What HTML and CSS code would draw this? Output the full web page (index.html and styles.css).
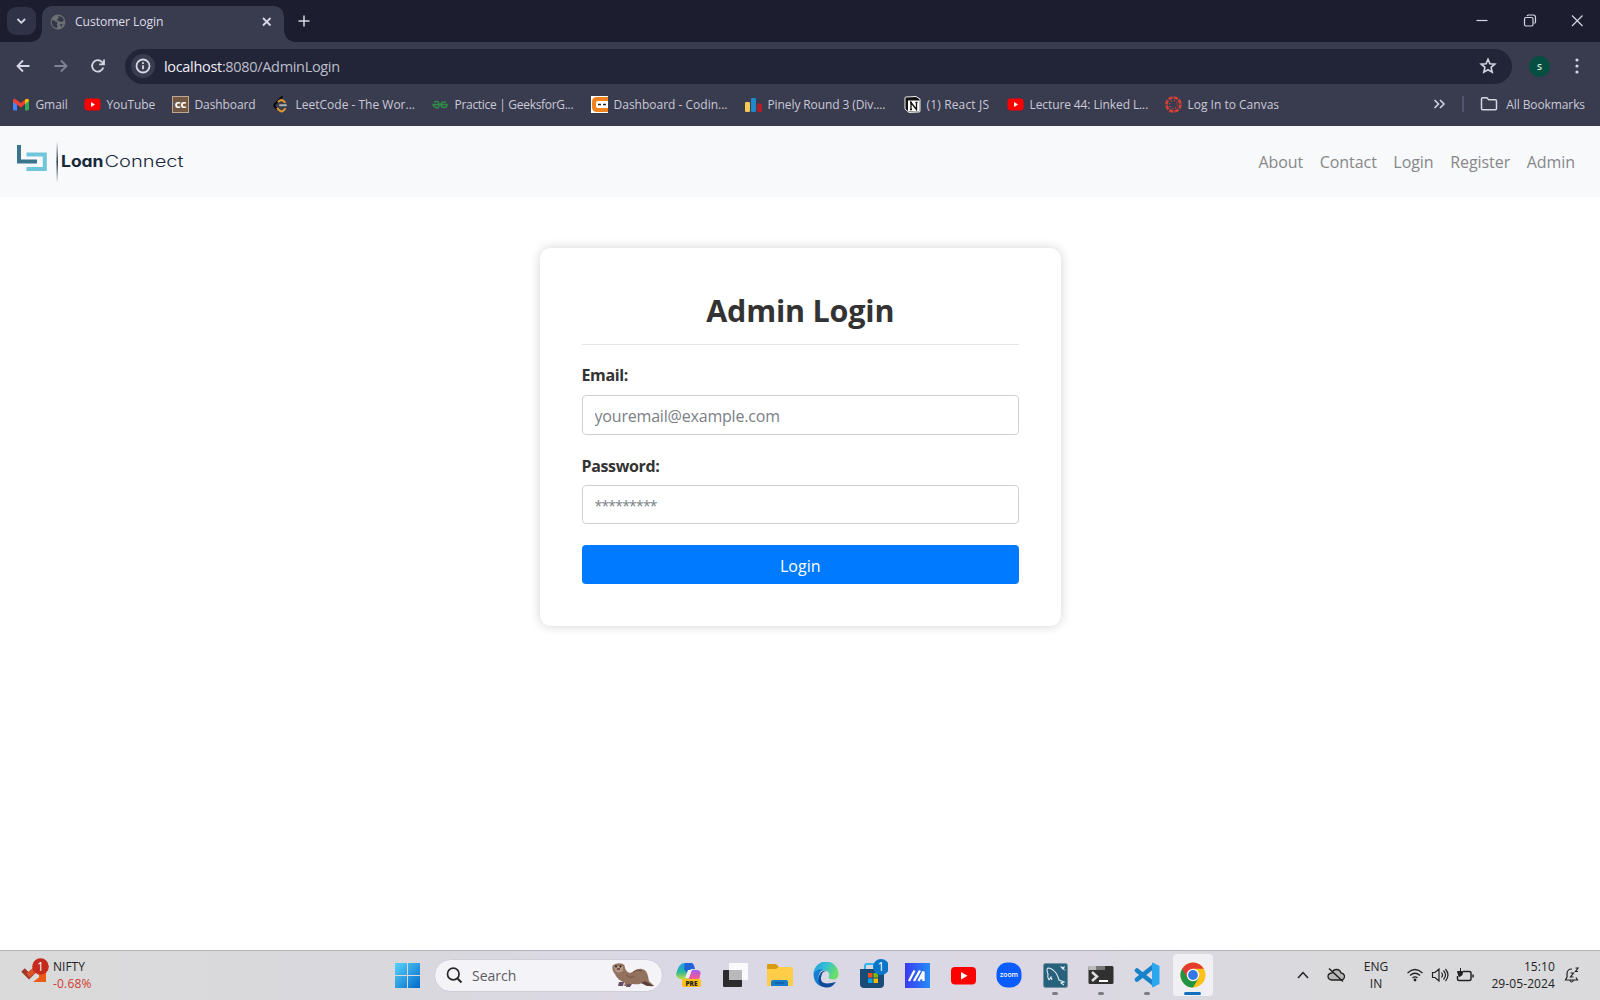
FILE: index.html
```html
<!DOCTYPE html>
<html lang="en">
<head>
<meta charset="utf-8">
<title>Customer Login</title>
<link rel="stylesheet" href="styles.css">
</head>
<body>
<div class="desktop">
  <header class="browser">
    <div class="tabstrip">
      <div class="tab-search"><svg width="29" height="28" viewBox="0 0 29 28"><path d="M10.500 12l3.800 3.800 3.800-3.800" class="line w2"/></svg></div>
      <div class="tab">
        <svg width="16" height="16" viewBox="0 0 16 16"><circle cx="8" cy="8" r="7.400" fill="#6c7073"/><path d="M2 6c2 .3 3 1.500 5 2 1 1-1 2 .5 4l-.5 2C3 14 1 10 2 6zM8 2l4 1 2 3c-1 2-3 2-4 1.500L8 7 7 5l2-1zM10 10l3 .5-2 2.500z" fill="#34374a"/></svg>
        <span class="tab-title">Customer Login</span>
        <svg width="12" height="12" viewBox="0 0 12 12"><path d="M2 2l7.500 7.500M9.500 2L2 9.500" class="line w2"/></svg>
      </div>
      <svg class="new-tab" width="14" height="14" viewBox="0 0 14 14"><path d="M7 1.500v11M1.500 7h11" class="line w15"/></svg>
      <div class="window-buttons">
        <svg width="14" height="14" viewBox="0 0 14 14"><path d="M1.500 6.500h11" class="line thin"/></svg>
        <svg width="14" height="14" viewBox="0 0 14 14"><rect x="1.500" y="3.500" width="8.500" height="8.500" rx="1.500" class="line thin"/><path d="M4 2q.5-1 2-1h4q2.500 0 2.500 2.500v4q0 1.500-1 2" class="line thin"/></svg>
        <svg width="14" height="14" viewBox="0 0 14 14"><path d="M2 1.500l10.500 10.500M12.500 1.500L2 12" class="line thin"/></svg>
      </div>
    </div>
    <div class="toolbar">
      <div class="nav-icons">
        <svg width="16" height="16" viewBox="0 0 16 16"><path d="M14.500 8H3M8 2.500L2.500 8 8 13.500" class="line w2"/></svg>
        <svg width="16" height="16" viewBox="0 0 16 16" class="dim"><path d="M1.500 8H13M8 2.500L13.500 8 8 13.500" class="line w2"/></svg>
        <svg width="16" height="16" viewBox="0 0 16 16"><path d="M13.300 9.500A5.700 5.700 0 1 1 12 4l1.500 1.500M14 1.500v4.800H9.200" class="line w2"/></svg>
      </div>
      <div class="address">
        <div class="site-info"><svg width="16" height="16" viewBox="0 0 16 16"><circle cx="8" cy="8" r="6.500" class="line w2"/><path d="M8 7.300v4M8 4.300v1.600" class="line w2"/></svg></div>
        <div class="url"><b>localhost</b>:8080/AdminLogin</div>
        <svg width="18" height="18" viewBox="0 0 18 18"><path d="M9 2.300l1.900 4.500 4.900.4-3.700 3.200 1.100 4.800L9 12.700l-4.200 2.500 1.100-4.800-3.700-3.200 4.900-.4z" fill="none" stroke="#d6d7e4" stroke-width="1.600"/></svg>
      </div>
      <div class="profile">S</div>
      <svg width="6" height="18" viewBox="0 0 6 18" fill="#d6d7e4"><circle cx="3" cy="3" r="1.600"/><circle cx="3" cy="9" r="1.600"/><circle cx="3" cy="15" r="1.600"/></svg>
    </div>
    <nav class="bookmarks">
      <div class="bm"><svg width="17" height="17" viewBox="0 0 17 17"><path d="M0 4v9q0 1.500 1.500 1.500H4V6z" fill="#4285f4"/><path d="M16 4v9q0 1.500-1.500 1.500H12V6z" fill="#34a853"/><path d="M12 3.500q4-2 4 1.500L12 8z" fill="#fbbc04"/><path d="M0 5q0-3.500 3-1.500l5 3.600L12 3.500V8l-4 3.500L0 6z" fill="#ea4335"/></svg><span>Gmail</span></div>
      <div class="bm"><svg width="17" height="17" viewBox="0 0 17 17"><rect x=".5" y="2.500" width="16" height="12" rx="3" fill="#f00"/><path d="M7 6v5l4-2.500z" fill="#fff"/></svg><span>YouTube</span></div>
      <div class="bm"><svg width="17" height="17" viewBox="0 0 17 17"><rect x=".5" y=".5" width="16" height="16" fill="#725744" stroke="#bda992"/><text x="8.500" y="12" class="cc">CC</text></svg><span>Dashboard</span></div>
      <div class="bm"><svg width="17" height="17" viewBox="0 0 17 17" fill="none" stroke-width="2" stroke-linecap="round"><path d="M9 1L2 8q-1.200 1.500 0 3l2 2" stroke="#080808"/><path d="M5.500 5.500q2.500-2.500 5-.5l1.300 1.200M4.500 12.500l1.500 1.500q2.500 2.500 4.500.5l1.500-1.500" stroke="#dd9632"/><path d="M7 9.300h6" stroke="#b3b3b3"/></svg><span class="leet">LeetCode - The Wor...</span></div>
      <div class="bm"><svg width="17" height="17" viewBox="0 0 17 17" fill="none" stroke="#2f8d46" stroke-width="1.500"><path d="M2 6Q7 4 7 8.500T4 11.500 1 8.500h14Q15 11.500 12 11.500T9 8.500 14 6"/></svg><span class="gfg">Practice | GeeksforG...</span></div>
      <div class="bm"><svg width="17" height="17" viewBox="0 0 17 17"><path d="M0 0h17v17H0z" fill="#fff"/><path d="M17 1H6Q1 1 1 6v5q0 5 5 5h11v-4H7q-2 0-2-1.500v-4Q5 5 7 5h10z" fill="#f0831e"/><path d="M7 8.500h3M12 8.500h3" stroke="#222" stroke-width="1.500"/></svg><span class="leet">Dashboard - Codin...</span></div>
      <div class="bm"><svg width="17" height="17" viewBox="0 0 17 17"><rect x="0" y="6" width="5" height="10" rx="1.300" fill="#f6c955"/><rect x="6" y="2" width="5" height="14" rx="1.300" fill="#1f8acb"/><rect x="12" y="7.500" width="5" height="8.500" rx="1.300" fill="#b01e2b"/></svg><span>Pinely Round 3 (Div....</span></div>
      <div class="bm"><svg width="17" height="17" viewBox="0 0 17 17"><path d="M1 2q0-1 1-1l10-.5L16 3v12q0 1-1 1l-10 .5L1 13z" fill="#111" stroke="#eee"/><path d="M4 4.500h11.500v11H4z" fill="#fff"/><path d="M7 13.500v-7l5.500 7v-7M6 6.500h2M6 13.500h2M11.500 6.500h2" fill="none" stroke="#111" stroke-width="1.300"/></svg><span class="react">(1) React JS</span></div>
      <div class="bm"><svg width="17" height="17" viewBox="0 0 17 17"><rect x=".5" y="2.500" width="16" height="12" rx="3" fill="#f00"/><path d="M7 6v5l4-2.500z" fill="#fff"/></svg><span>Lecture 44: Linked L...</span></div>
      <div class="bm"><svg width="17" height="17" viewBox="0 0 17 17" fill="none" stroke="#d64035"><circle cx="8.500" cy="8.500" r="7" stroke-width="2.600" stroke-dasharray="4.300 1.200"/><circle cx="8.500" cy="8.500" r="4" stroke-width="1.300" stroke-dasharray="1.200 1.940"/></svg><span class="leet">Log In to Canvas</span></div>
      <div class="bm-more">
        <svg width="13" height="12" viewBox="0 0 13 12"><path d="M1.500 2l4 4-4 4M7 2l4 4-4 4" class="line w15"/></svg>
        <i></i>
        <svg width="18" height="16" viewBox="0 0 18 16"><path d="M1.500 3q0-1.300 1.300-1.300h4l2 2h6.400q1.300 0 1.300 1.300v7.500q0 1.300-1.300 1.300H2.800q-1.300 0-1.300-1.300z" class="line w15"/></svg>
        <span>All Bookmarks</span>
      </div>
    </nav>
  </header>

  <main class="page">
    <div class="site-nav">
      <svg class="logo" width="170" height="44" viewBox="0 0 170 44">
        <defs><linearGradient id="fade" x2="0" y2="1"><stop stop-color="#17283b" stop-opacity="0"/><stop offset=".5" stop-color="#17283b"/><stop offset="1" stop-color="#17283b" stop-opacity="0"/></linearGradient></defs>
        <path d="M10.500 13.500h18.300V28H10.500" fill="none" stroke="#6fc6da" stroke-width="4"/>
        <path d="M3 4v16.500h18" fill="none" stroke="#39758b" stroke-width="4"/>
        <rect x="40.500" y="0" width="1.400" height="42" fill="url(#fade)"/>
        <text x="45" y="26" class="logo-bold" textLength="42.500" lengthAdjust="spacingAndGlyphs">Loan</text>
        <text x="88.500" y="26" class="logo-light" textLength="79" lengthAdjust="spacingAndGlyphs">Connect</text>
      </svg>
      <div class="links"><a>About</a><a>Contact</a><a>Login</a><a>Register</a><a>Admin</a></div>
    </div>
    <form class="card">
      <h1>Admin Login</h1>
      <label>Email:</label>
      <input type="email" placeholder="youremail@example.com">
      <label>Password:</label>
      <input type="password" class="pw" placeholder="*********">
      <button type="button">Login</button>
    </form>
  </main>

  <footer class="taskbar">
    <div class="widget">
      <svg width="32" height="30" viewBox="0 0 32 30"><path d="M2 12l6 6 6-6" fill="none" stroke="#a0382c" stroke-width="5"/><path d="M7 17.500l8-7 5 5" fill="none" stroke="#d9532c" stroke-width="5"/><path d="M12 24l13-10v10z" fill="#ec5a12"/><path d="M18 15h7v9h-7z" fill="#ec5a12"/><circle cx="19.500" cy="8.500" r="8.300" fill="#c42b1c"/><text x="19.500" y="12.500" class="badge-num">1</text></svg>
      <div><div>NIFTY</div><div class="down">-0.68%</div></div>
    </div>
    <div class="start"><svg width="25" height="25" viewBox="0 0 25 25"><defs><linearGradient id="win" x2="1" y2="1"><stop stop-color="#59d3fa"/><stop offset="1" stop-color="#0069c9"/></linearGradient></defs><path d="M0 0h12v12H0zM13 0h12v12H13zM0 13h12v12H0zM13 13h12v12H13z" fill="url(#win)"/></svg></div>
    <div class="search">
      <svg width="17" height="17" viewBox="0 0 17 17"><circle cx="7.300" cy="7" r="5.800" fill="none" stroke="#262626" stroke-width="1.700"/><path d="M11.500 11.500l4 4" stroke="#262626" stroke-width="2"/></svg>
      <span>Search</span>
      <svg width="44" height="26" viewBox="0 0 44 26"><path d="M4 12C1 9 1 5 2 3q5-3 10-1 2 1 2 4 1 4 5 5c4-1 6-5 12-4 6 1 6 8 7 12l5 5c-5 1-9-1-12-3-3 2-6 1-11 1l-3 2h-4l1-3c-4-2-8-4-10-9z" fill="#92715f"/><path d="M3 4h9v5q-4 3-8 0z" fill="#b49885"/><path d="M8 20h5l-1 4H7zM16 22h5l-2 3h-4z" fill="#665064"/><path d="M34 19l9 5h-7l-6-3z" fill="#5a4038"/><path d="M15 13q5 4 8 1M22 10q4-3 9-1" fill="none" stroke="#75523f"/><circle cx="5" cy="4.500" r=".9" fill="#111"/><circle cx="9.500" cy="4.500" r=".9" fill="#111"/><path d="M6 7h3" stroke="#3f2e2c" stroke-width="1.300"/></svg>
    </div>
    <div class="apps">
      <div class="app"><svg width="26" height="26" viewBox="0 0 26 26"><defs><linearGradient id="cp" x2="0" y2="1"><stop stop-color="#249df0"/><stop offset=".5" stop-color="#27b89c"/><stop offset="1" stop-color="#d9df36"/></linearGradient><linearGradient id="cq" x2="0" y2="1"><stop stop-color="#a05ff0"/><stop offset=".6" stop-color="#ee579b"/><stop offset="1" stop-color="#f29951"/></linearGradient></defs><path d="M8 1h9l-5 15q-1 3-4 2-8-1-8-6Q3 1 8 1z" fill="url(#cp)"/><path d="M9 1h6q3 0 4 6h-5l-2 5-4-5z" fill="#2163d7"/><path d="M15 8h6q5 0 3 6-1 6-5 6H9q4-1 6-12z" fill="url(#cq)"/><path d="M12 8h4l-3 8H9z" fill="#f3eafa"/><rect x="6" y="17" width="19" height="8" rx="2" fill="#ffc21a"/><text x="15.500" y="23.700" class="pre">PRE</text></svg></div>
      <div class="app"><svg width="26" height="26" viewBox="0 0 26 26"><rect x="1" y="8" width="19" height="17" rx="1" fill="#2c2c2e"/><rect x="7" y="1" width="19" height="17" rx="1" fill="#fff" opacity=".85"/><path d="M7 8h13v10H7z" fill="#b9b9bb"/></svg></div>
      <div class="app"><svg width="26" height="26" viewBox="0 0 26 26"><path d="M0 3q0-1 1-1h8l3 3-3 3H0z" fill="#d99a12"/><path d="M0 7h9l3-2h12q2 0 2 2v17H0z" fill="#ffcd48"/><path d="M4 24v-4q0-2 2-2h13q2 0 2 2v4z" fill="#157bc9"/><path d="M8 21h9" stroke="#0d4f8b"/></svg></div>
      <div class="app"><svg width="26" height="26" viewBox="0 0 26 26"><defs><linearGradient id="ed" x2="1" y2=".4"><stop stop-color="#2197df"/><stop offset=".5" stop-color="#33bfd5"/><stop offset="1" stop-color="#69df67"/></linearGradient></defs><path d="M.5 12A12.500 12.500 0 0 1 25.500 12q0 5-5 5.500-6 0-4.500-3 1-6-5-6-6 0-10.500 3.500z" fill="url(#ed)"/><path d="M.5 12q3-6 10-4.500-5 2-5 8.500 1 8 8 9.300Q1 25 .5 12z" fill="#1180d4"/><path d="M9 12q-5 13 14 8-4 6-10 5.500Q3 24 6 14q2-6 8-5-4 0-5 3z" fill="#114a96"/></svg></div>
      <div class="app"><svg width="32" height="32" viewBox="0 0 32 32"><path d="M9 10V7q0-2 2-2h8" fill="none" stroke="#33b3ee" stroke-width="2"/><path d="M4 10h24v15q0 4-4 4H8q-4 0-4-4z" fill="#184b76"/><path d="M12 14h4.500v4.500H12z" fill="#f25022"/><path d="M17.500 14H22v4.500h-4.500z" fill="#7fba00"/><path d="M12 19.500h4.500V24H12z" fill="#00a4ef"/><path d="M17.500 19.500H22V24h-4.500z" fill="#ffb900"/><circle cx="25" cy="8" r="8" fill="#0875c9"/><text x="25" y="12" class="badge-num">1</text></svg></div>
      <div class="app"><svg width="25" height="25" viewBox="0 0 25 25"><defs><linearGradient id="ma" x2="1"><stop stop-color="#3a3af3"/><stop offset="1" stop-color="#258cf6"/></linearGradient></defs><path d="M0 0h25v25H0z" fill="url(#ma)"/><path d="M4 18L9.500 7.500M9 18l6-10.500M13.500 18l5-9.500v9.500M15.500 15h3" fill="none" stroke="#fff" stroke-width="2.300"/></svg></div>
      <div class="app"><svg width="25" height="25" viewBox="0 0 25 25"><rect y="4" width="25" height="17.500" rx="4" fill="#f00"/><path d="M10 9v7.500l6.500-3.700z" fill="#fff"/></svg></div>
      <div class="app"><svg width="26" height="26" viewBox="0 0 26 26"><rect x=".5" y=".5" width="25" height="25" rx="11" fill="#0b5cff"/><text x="13" y="15" class="zoom" textLength="18" lengthAdjust="spacingAndGlyphs">zoom</text></svg></div>
      <div class="app running"><svg width="25" height="25" viewBox="0 0 25 25"><rect x=".5" y=".5" width="24" height="24" rx="2" fill="#28617b" stroke="#7393a2"/><path d="M6 17q-2-3-1-6-2-5 0-6 4 0 8 5 2 3 3 7l5 2-3 1 3 2M6 17l2-3 1 3" fill="none" stroke="#e3ecef" stroke-width="1.100"/><path d="M17 3l3 1 2-1-1 3 2 2-4-2z" fill="#e3ecef"/></svg></div>
      <div class="app running"><svg width="26" height="26" viewBox="0 0 26 26"><rect x=".5" y="4" width="25" height="18" rx="1.500" fill="#303030"/><path d="M.5 8V5.500Q.5 4 2 4h6v4z" fill="#bcbcbc"/><path d="M8 4h9v4H8z" fill="#777"/><path d="M4 10l5 4.500L4 19" fill="none" stroke="#ddd" stroke-width="2.500"/><path d="M11 19h9" stroke="#fff" stroke-width="2"/></svg></div>
      <div class="app running"><svg width="26" height="26" viewBox="0 0 26 26"><path d="M3 8.500L20 22M3 17.500L20 4" stroke="#1682c8" stroke-width="4.500" stroke-linecap="round"/><path d="M18 .5l7.500 3.500v18L18 25.500z" fill="#2aa7ee"/></svg></div>
      <div class="app active"><svg width="26" height="26" viewBox="0 0 26 26"><circle cx="13" cy="13" r="12.500" fill="#fbc116"/><path d="M13 13L2.200 6.700A12.500 12.500 0 0 0 13 25.500l5.500-9.500z" fill="#229342"/><path d="M2.200 6.700A12.500 12.500 0 0 1 23.800 6.700H13L7.500 16z" fill="#e33b2e"/><circle cx="13" cy="13" r="6.200" fill="#fff"/><circle cx="13" cy="13" r="4.900" fill="#3478e5"/></svg></div>
    </div>
    <div class="tray">
      <svg width="14" height="10" viewBox="0 0 14 10"><path d="M2 8l5-5.500L12 8" class="ink"/></svg>
      <svg width="18" height="18" viewBox="0 0 18 18"><path d="M5 14q-4-.5-4-3.500T5 7q1-3.500 4.500-3.500T14 7q3.500.5 3.500 3.500T14 14z" fill="#b8b8b8" stroke="#222" stroke-width="1.300"/><path d="M2 2.500l14 13" class="ink"/></svg>
      <div class="lang">ENG<br>IN</div>
      <div class="status">
        <svg width="18" height="16" viewBox="0 0 18 16"><path d="M1.500 6q7.500-7 15 0M4 8.500q5-4.500 10 0M6.500 11q2.500-2.300 5 0" class="ink slim"/><circle cx="9" cy="13" r="1.400" fill="#222"/></svg>
        <svg width="18" height="16" viewBox="0 0 18 16"><path d="M1.500 5.500v5h2.500L8 14V2L4 5.500zM10.500 5.500q2 2.500 0 5M12.500 3.500q4 4.500 0 9M14.500 2q5 6 0 12" class="ink slim"/></svg>
        <svg width="18" height="16" viewBox="0 0 18 16"><path d="M7 4.500h6.500q1.500 0 1.500 1.500v6q0 1.500-1.500 1.500H3q-1.500 0-1.500-1.500V9M17 7.500v3" class="ink"/><path d="M4.500 1v3.500M1.500 4.500h5v1.500q0 3-3.500 3.500z" fill="#222" stroke="#222"/></svg>
      </div>
      <div class="clock">15:10<br>29-05-2024</div>
      <svg width="16" height="18" viewBox="0 0 16 18"><path d="M8 3Q3 3 3 8v3l-1.500 3h12L12 11.500M6 14.500q1.500 3 3.500 0M6.500 7h3l-3 4h3M11.500 2H14l-2.500 3.500H14" class="ink slim"/></svg>
    </div>
  </footer>
</div>
</body>
</html>
```

FILE: styles.css
```css
* { box-sizing: border-box; }
body { margin: 0; font-family: "Open Sans", "Noto Sans", sans-serif; }
svg { display: block; flex: none; }
.desktop { width: 1600px; height: 1000px; display: flex; flex-direction: column; background: #fff; overflow: hidden; }

.line { fill: none; stroke: #d6d7e4; }
.w2 { stroke-width: 1.8; }
.w15 { stroke-width: 1.5; }
.thin { stroke-width: 1.2; }
.dim { opacity: .45; }
.ink { fill: none; stroke: #222; stroke-width: 1.5; }
.slim { stroke-width: 1.2; }

.browser { height: 126px; background: #393b4f; color: #c9cad8; }
.tabstrip { height: 48px; margin-bottom: -6px; padding: 6px 15px 6px 7px; display: flex; align-items: flex-start; background: linear-gradient(#1c1d2e, #1c1d2e) 0 0 / 100% 42px no-repeat; }
.tab-search { width: 29px; height: 28px; margin-top: 1px; border-radius: 9px; background: #303347; }
.tab { position: relative; width: 242px; height: 36px; margin-left: 6px; padding: 0 11px 5px 8px; display: flex; align-items: center; gap: 9px; background: #393b4f; border-radius: 10px 10px 0 0; }
.tab::before, .tab::after { content: ""; position: absolute; bottom: 0; width: 11px; height: 11px; }
.tab::before { left: -11px; background: radial-gradient(circle at 0 0, transparent 10.5px, #393b4f 11px); }
.tab::after { right: -11px; background: radial-gradient(circle at 100% 0, transparent 10.5px, #393b4f 11px); }
.tab-title { flex: 1; font-size: 12.2px; letter-spacing: -.1px; color: #dcdde8; white-space: nowrap; }
.new-tab { margin: 8px 0 0 13px; }
.window-buttons { margin: 8px 1px 0 auto; display: flex; gap: 33.5px; }
.toolbar { height: 48px; padding: 0 20px 0 15px; display: flex; align-items: center; }
.nav-icons { display: flex; gap: 21.5px; width: 110px; }
.address { width: 1387px; height: 35px; padding: 0 15px 0 6px; display: flex; align-items: center; border-radius: 18px; background: #222538; }
.site-info { width: 24px; height: 24px; display: grid; place-items: center; border-radius: 50%; background: #393b4f; }
.url { flex: 1; margin-left: 9px; font-size: 14.5px; letter-spacing: -.32px; color: #bdbecb; }
.url b { font-weight: 400; color: #eeeef6; }
.profile { width: 21px; height: 21px; margin: 0 24px 0 17px; border-radius: 50%; display: grid; place-items: center; background: #044f41; color: #e2efe9; font: 600 9px "Open Sans", sans-serif; }
.bookmarks { height: 28px; padding: 0 15px 0 13px; display: grid; grid-template-columns: 71px 88px 101px 159px 159px 154px 159px 103px 158px 160px 1fr; align-items: center; font-size: 12px; letter-spacing: -.1px; white-space: nowrap; }
.bm, .bm-more { display: flex; align-items: center; gap: 5.5px; }
.bm-more { justify-content: flex-end; gap: 8px; }
.bm-more i { width: 2px; height: 16px; margin: 0 8px; background: #51546a; }
.leet { letter-spacing: 0; }
.gfg { letter-spacing: -.3px; }
.react { letter-spacing: .15px; }
.cc { font: 800 9px "Open Sans", sans-serif; fill: #fff; text-anchor: middle; }

.page { flex: 1; }
.site-nav { height: 71px; padding: 0 25px 0 16px; display: flex; align-items: center; justify-content: space-between; background: #f8f9fb; }
.logo { margin-top: 2px; }
.logo-bold, .logo-light { font-family: Inter, sans-serif; font-size: 16px; fill: #17283b; font-feature-settings: "cv11"; }
.logo-bold { font-weight: 700; }
.logo-light { font-weight: 300; }
.links { display: flex; gap: 16.5px; font-size: 16px; letter-spacing: -.05px; color: #868789; }
.card { width: 521px; height: 378px; margin: 51px auto 0 540px; padding: 42px 42px 42px 41.500px; display: flex; flex-direction: column; border-radius: 11px; background: #fff; box-shadow: 0 0 11px rgba(0, 0, 0, .18); color: #333; }
.card h1 { height: 55px; margin: 0 0 19px; border-bottom: 1px solid #e3e5e7; text-align: center; font-size: 30.5px; line-height: 40px; font-weight: 700; letter-spacing: -.2px; }
.card label { height: 30px; font-size: 16px; line-height: 22px; font-weight: 700; letter-spacing: -.35px; }
.card label:first-of-type { height: 31px; }
.card input { height: 40px; margin: 0 0 20px; padding: 1px 12px 0; border: 1px solid #ced1d4; border-radius: 4px; font: 16px "Open Sans", sans-serif; letter-spacing: -.19px; color: #495057; outline: 0; }
.card input::placeholder { color: #7a8086; opacity: 1; }
.card .pw { height: 39px; margin-bottom: 21px; font-size: 14px; letter-spacing: -.8px; }
.card button { height: 39px; padding: 2px 0 0; border: 0; border-radius: 4px; background: #007bff; color: #fff; font: 16px "Open Sans", sans-serif; }

.taskbar { height: 50px; padding-bottom: 1px; border-top: 1px solid #b2b2b5; display: flex; align-items: center; background: linear-gradient(90deg, #dadada, #d9d8dd 25%, #dbd8e6 42%, #dbd8e4 65%, #dadadc 85%); color: #222; font-size: 12px; line-height: 17px; }
.widget { width: 395px; padding-left: 21px; display: flex; gap: 0; }
.down { color: #cf3a30; letter-spacing: .2px; }
.start { width: 39px; }
.search { width: 229px; height: 33px; padding: 0 7px 0 11px; display: flex; align-items: center; border-radius: 17px; border: 1px solid #cfcdd8; background: #f4f3f8; }
.search span { flex: 1; margin-left: 9px; font-size: 14px; color: #5c5c60; }
.apps { margin-left: 3px; display: grid; grid-template-columns: repeat(12, 45.8px); }
.app { position: relative; height: 42px; display: grid; place-items: center; }
.running::after, .active::after { content: ""; position: absolute; bottom: 1px; width: 6px; height: 3px; border-radius: 2px; background: #7e7c83; }
.active { width: 40px; margin-left: 3px; border-radius: 4px; background: #f0eff3; }
.active::after { width: 17px; background: #1270bd; }
.badge-num { font: 12px "Open Sans", sans-serif; fill: #fff; text-anchor: middle; }
.pre { font: 800 6.500px "Open Sans", sans-serif; fill: #222; text-anchor: middle; }
.zoom { font: 600 6.500px "Open Sans", sans-serif; fill: #fff; text-anchor: middle; }
.tray { flex: 1; padding-right: 20px; display: flex; justify-content: flex-end; align-items: center; }
.tray > svg:nth-child(2) { margin-left: 17px; }
.lang { width: 30px; margin: 0 15px 0 16px; text-align: center; }
.status { display: flex; gap: 7px; }
.clock { width: 81px; margin-right: 9px; text-align: right; letter-spacing: .1px; white-space: nowrap; }
```
